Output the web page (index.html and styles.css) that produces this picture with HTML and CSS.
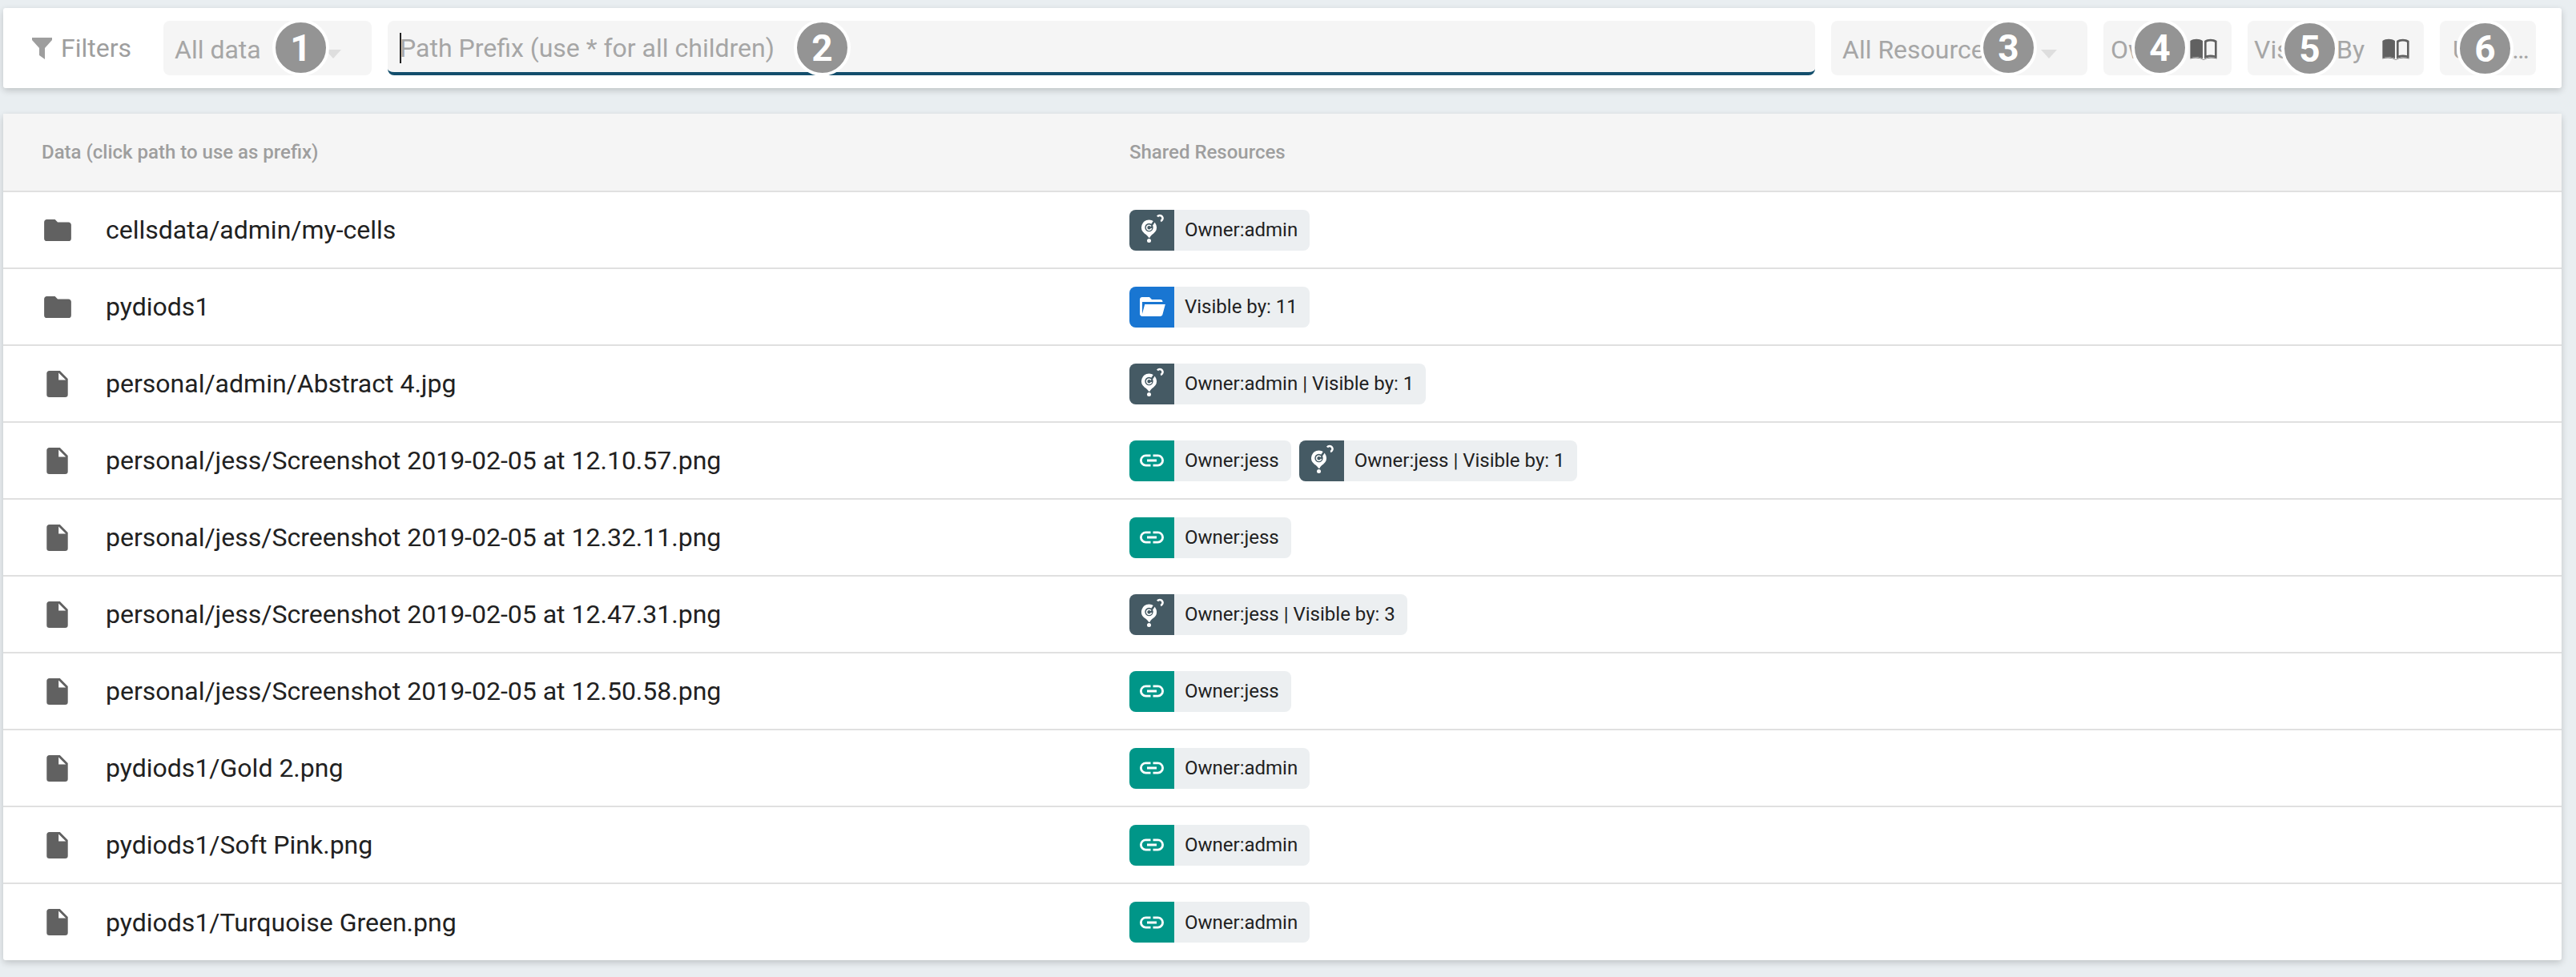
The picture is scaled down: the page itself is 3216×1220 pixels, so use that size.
FILE: index.html
```html
<!DOCTYPE html>
<html lang="en">
<head>
    <meta charset="UTF-8">
    <title>Shared Resources</title>
    <link rel="stylesheet" href="styles.css">
</head>
<body>
    <svg class="defs" width="0" height="0">
        <symbol id="i-folder" viewBox="2 4 20 16"><path d="M10,4H4C2.89,4 2,4.89 2,6V18A2,2 0 0,0 4,20H20A2,2 0 0,0 22,18V8C22,6.89 21.1,6 20,6H12L10,4Z"/></symbol>
        <symbol id="i-file" viewBox="4 2 16 20"><path d="M13,9V3.5L18.5,9M6,2C4.89,2 4,2.89 4,4V20A2,2 0 0,0 6,22H18A2,2 0 0,0 20,20V8L14,2H6Z"/></symbol>
        <symbol id="i-open" viewBox="0 0 24 24"><path d="M19,20H4C2.89,20 2,19.1 2,18V6C2,4.89 2.89,4 4,4H10L12,6H19A2,2 0 0,1 21,8H21L4,8V18L6.14,10H23.21L20.93,18.5C20.7,19.37 19.92,20 19,20Z"/></symbol>
        <symbol id="i-link" viewBox="0 0 24 24"><path d="M3.9,12C3.9,10.29 5.29,8.9 7,8.9H11V7H7A5,5 0 0,0 2,12A5,5 0 0,0 7,17H11V15.1H7C5.29,15.1 3.9,13.71 3.9,12M8,13H16V11H8V13M17,7H13V8.9H17C18.71,8.9 20.1,10.29 20.1,12C20.1,13.71 18.71,15.1 17,15.1H13V17H17A5,5 0 0,0 22,12A5,5 0 0,0 17,7Z"/></symbol>
        <symbol id="i-cells" viewBox="0 0 56 51">
            <path d="M24.500 12.500a9.500 9.500 0 0 0-5.500 17.200c2.200 1.500 4 2.800 5 5h1.500c.7-2.200 2.500-3.500 4.500-5a9.500 9.500 0 0 0-5.500-17.200z"/>
            <circle class="cut" cx="24.500" cy="22" r="5.200"/>
            <path class="cut-line" d="M32 13l-5.500 8"/>
            <path class="thin" d="M27 20.500a3 3 0 1 0 .5 2.500"/>
            <circle cx="24.500" cy="38.500" r="2.500"/>
            <path class="thin-wide" d="M35 8.500a3.600 3.600 0 1 1 4 5.500"/>
        </symbol>
        <symbol id="i-book" viewBox="0 0 32 26">
            <path d="M0 3c4-3 11-3 15 0v21h-0.500c-4-2-10-2-14.500-.5zM17 3c4-3 11-3 15 0v20.500c-4.500-1.500-10.500-1.500-14.500.5h-.5zM19.500 4.500v16c3-1 7-1 10 0v-16c-3-1.500-7-1.500-10 0z" fill-rule="evenodd"/>
            <path d="M0 23.500c5-1.500 11.500-1.500 16 2 4.500-3.500 11-3.500 16-2v1c-5-1.500-11.500-1.500-16 1.500-4.500-3-11-3-16-1.500z"/>
        </symbol>
    </svg>

    <div class="filters panel">
        <div class="filters-label">
            <svg class="funnel" viewBox="0 0 25 27"><path d="M0 0h25v3l-9 10v14l-7-5v-9L0 3z"/></svg>
            <span>Filters</span>
        </div>
        <div class="field field-data">
            <span class="field-text">All data</span><i class="arrow"></i>
            <b class="badge badge-1">1</b>
        </div>
        <div class="field field-path">
            <i class="caret"></i><span class="field-text">Path Prefix (use * for all children)</span>
            <b class="badge badge-2">2</b>
        </div>
        <div class="field field-res">
            <span class="field-text">All Resources</span><i class="arrow"></i>
            <b class="badge badge-3">3</b>
        </div>
        <div class="field field-owner">
            <span class="field-text">Owner</span>
            <svg class="book"><use href="#i-book"/></svg>
            <b class="badge badge-4">4</b>
        </div>
        <div class="field field-visible">
            <span class="field-text">Visible By</span>
            <svg class="book"><use href="#i-book"/></svg>
            <b class="badge badge-5">5</b>
        </div>
        <div class="field field-user">
            <span class="field-text clip">Updated by</span>
            <b class="badge badge-6">6</b>
        </div>
    </div>

    <div class="table panel">
        <div class="row head">
            <div class="col-data">Data (click path to use as prefix)</div>
            <div class="col-res">Shared Resources</div>
        </div>

        <div class="row">
            <div class="col-data"><svg class="ico-folder"><use href="#i-folder"/></svg>cellsdata/admin/my-cells</div>
            <div class="col-res">
                <span class="chip"><span class="chip-ico dark"><svg><use href="#i-cells"/></svg></span><span class="chip-txt">Owner:admin</span></span>
            </div>
        </div>
        <div class="row">
            <div class="col-data"><svg class="ico-folder"><use href="#i-folder"/></svg>pydiods1</div>
            <div class="col-res">
                <span class="chip"><span class="chip-ico blue"><svg class="small"><use href="#i-open"/></svg></span><span class="chip-txt">Visible by: 11</span></span>
            </div>
        </div>
        <div class="row">
            <div class="col-data"><svg class="ico-file"><use href="#i-file"/></svg>personal/admin/Abstract 4.jpg</div>
            <div class="col-res">
                <span class="chip"><span class="chip-ico dark"><svg><use href="#i-cells"/></svg></span><span class="chip-txt">Owner:admin | Visible by: 1</span></span>
            </div>
        </div>
        <div class="row">
            <div class="col-data"><svg class="ico-file"><use href="#i-file"/></svg>personal/jess/Screenshot 2019-02-05 at 12.10.57.png</div>
            <div class="col-res">
                <span class="chip"><span class="chip-ico teal"><svg class="small"><use href="#i-link"/></svg></span><span class="chip-txt">Owner:jess</span></span>
                <span class="chip"><span class="chip-ico dark"><svg><use href="#i-cells"/></svg></span><span class="chip-txt">Owner:jess | Visible by: 1</span></span>
            </div>
        </div>
        <div class="row">
            <div class="col-data"><svg class="ico-file"><use href="#i-file"/></svg>personal/jess/Screenshot 2019-02-05 at 12.32.11.png</div>
            <div class="col-res">
                <span class="chip"><span class="chip-ico teal"><svg class="small"><use href="#i-link"/></svg></span><span class="chip-txt">Owner:jess</span></span>
            </div>
        </div>
        <div class="row">
            <div class="col-data"><svg class="ico-file"><use href="#i-file"/></svg>personal/jess/Screenshot 2019-02-05 at 12.47.31.png</div>
            <div class="col-res">
                <span class="chip"><span class="chip-ico dark"><svg><use href="#i-cells"/></svg></span><span class="chip-txt">Owner:jess | Visible by: 3</span></span>
            </div>
        </div>
        <div class="row">
            <div class="col-data"><svg class="ico-file"><use href="#i-file"/></svg>personal/jess/Screenshot 2019-02-05 at 12.50.58.png</div>
            <div class="col-res">
                <span class="chip"><span class="chip-ico teal"><svg class="small"><use href="#i-link"/></svg></span><span class="chip-txt">Owner:jess</span></span>
            </div>
        </div>
        <div class="row">
            <div class="col-data"><svg class="ico-file"><use href="#i-file"/></svg>pydiods1/Gold 2.png</div>
            <div class="col-res">
                <span class="chip"><span class="chip-ico teal"><svg class="small"><use href="#i-link"/></svg></span><span class="chip-txt">Owner:admin</span></span>
            </div>
        </div>
        <div class="row">
            <div class="col-data"><svg class="ico-file"><use href="#i-file"/></svg>pydiods1/Soft Pink.png</div>
            <div class="col-res">
                <span class="chip"><span class="chip-ico teal"><svg class="small"><use href="#i-link"/></svg></span><span class="chip-txt">Owner:admin</span></span>
            </div>
        </div>
        <div class="row last">
            <div class="col-data"><svg class="ico-file"><use href="#i-file"/></svg>pydiods1/Turquoise Green.png</div>
            <div class="col-res">
                <span class="chip"><span class="chip-ico teal"><svg class="small"><use href="#i-link"/></svg></span><span class="chip-txt">Owner:admin</span></span>
            </div>
        </div>
    </div>
</body>
</html>
```

FILE: styles.css
```css
* {
    margin: 0;
    padding: 0;
    box-sizing: border-box;
}
body {
    font-family: Roboto, "Liberation Sans", sans-serif;
    background-color: #e9eef1;
    color: #212121;
    width: 3216px;
    height: 1220px;
    overflow: hidden;
    padding: 10px 18px 0 4px;
}
.defs {
    position: absolute;
}
.panel {
    background-color: #fff;
    box-shadow: 0 3px 9px rgba(0, 0, 0, 0.18);
    border-radius: 3px;
}

/* top bar */
.filters {
    height: 100px;
    display: flex;
    align-items: center;
    padding: 0 32px 0 36px;
    gap: 20px;
}
.filters-label {
    width: 144px;
    display: flex;
    align-items: center;
    color: #9e9e9e;
    font-size: 32px;
}
.funnel {
    width: 25px;
    height: 27px;
    margin-right: 11px;
    fill: #9e9e9e;
}
.field {
    position: relative;
    height: 68px;
    background-color: #f5f5f5;
    border-radius: 8px;
    display: flex;
    align-items: center;
    padding: 4px 14px 0;
    color: #a6a6a6;
    font-size: 32px;
    white-space: nowrap;
}
.field-data {
    width: 260px;
}
.field-path {
    flex: 1;
    padding-left: 15px;
    border-bottom: 4px solid #134e6c;
}
.field-res {
    width: 320px;
}
.field-owner {
    width: 160px;
    padding-left: 9px;
}
.field-visible {
    width: 220px;
    padding-left: 8px;
}
.field-user {
    width: 120px;
    padding: 4px 8px 0 16px;
}
.clip {
    overflow: hidden;
    text-overflow: ellipsis;
    min-width: 0;
}
.caret {
    width: 2px;
    height: 38px;
    margin-right: -2px;
    background-color: #222;
}
.arrow {
    position: absolute;
    top: 36px;
    right: 38px;
    border-left: 10px solid transparent;
    border-right: 10px solid transparent;
    border-top: 11px solid #dedede;
}
.book {
    position: absolute;
    top: 22px;
    right: 17px;
    width: 36px;
    height: 27px;
    fill: #616161;
}
.badge {
    position: absolute;
    top: -2px;
    width: 71px;
    height: 71px;
    border: 4px solid #fff;
    border-radius: 50%;
    background-color: #949494;
    color: #fff;
    font-size: 46px;
    font-weight: 700;
    display: flex;
    align-items: center;
    justify-content: center;
}
.badge-1 { left: 136px; }
.badge-2 { left: 507px; }
.badge-3 { left: 186px; }
.badge-4 { left: 35px; }
.badge-5 { left: 42px; top: -1px; }
.badge-6 { left: 21px; top: -1px; }

/* table */
.table {
    margin-top: 32px;
}
.row {
    display: flex;
    align-items: center;
    height: 96px;
    border-bottom: 2px solid #e0e0e0;
    font-size: 32px;
}
.row.last {
    height: 95px;
    border-bottom: none;
}
.row.head {
    height: 98px;
    background-color: #f5f5f5;
    color: #9e9e9e;
    font-size: 24px;
    font-weight: 500;
}
.col-data {
    width: 1406px;
    display: flex;
    align-items: center;
    padding-left: 48px;
    white-space: nowrap;
}
.col-res {
    display: flex;
    gap: 10px;
}
.ico-folder {
    width: 34px;
    height: 27px;
    margin: 0 43px 0 3px;
    fill: #616161;
}
.ico-file {
    width: 27px;
    height: 33px;
    margin: 0 47px 0 6px;
    fill: #616161;
}

/* resource chips */
.chip {
    display: flex;
    height: 51px;
    border-radius: 8px;
    overflow: hidden;
    background-color: #eceff1;
    font-size: 24px;
}
.chip-ico {
    width: 56px;
    display: flex;
    align-items: center;
    justify-content: center;
    fill: #fff;
}
.chip-ico svg {
    width: 56px;
    height: 51px;
}
.chip-ico svg.small {
    width: 36px;
    height: 36px;
}
.chip-ico.dark {
    background-color: #455a64;
}
.chip-ico.blue {
    background-color: #1976d2;
}
.chip-ico.teal {
    background-color: #009688;
}
.chip-txt {
    display: flex;
    align-items: center;
    padding: 0 15px 0 13px;
}

/* parts of the cells logo */
.cut {
    fill: #455a64;
}
.cut-line {
    fill: none;
    stroke: #455a64;
    stroke-width: 2.5px;
}
.thin {
    fill: none;
    stroke: #fff;
    stroke-width: 1.6px;
}
.thin-wide {
    fill: none;
    stroke: #fff;
    stroke-width: 2.6px;
}
```
